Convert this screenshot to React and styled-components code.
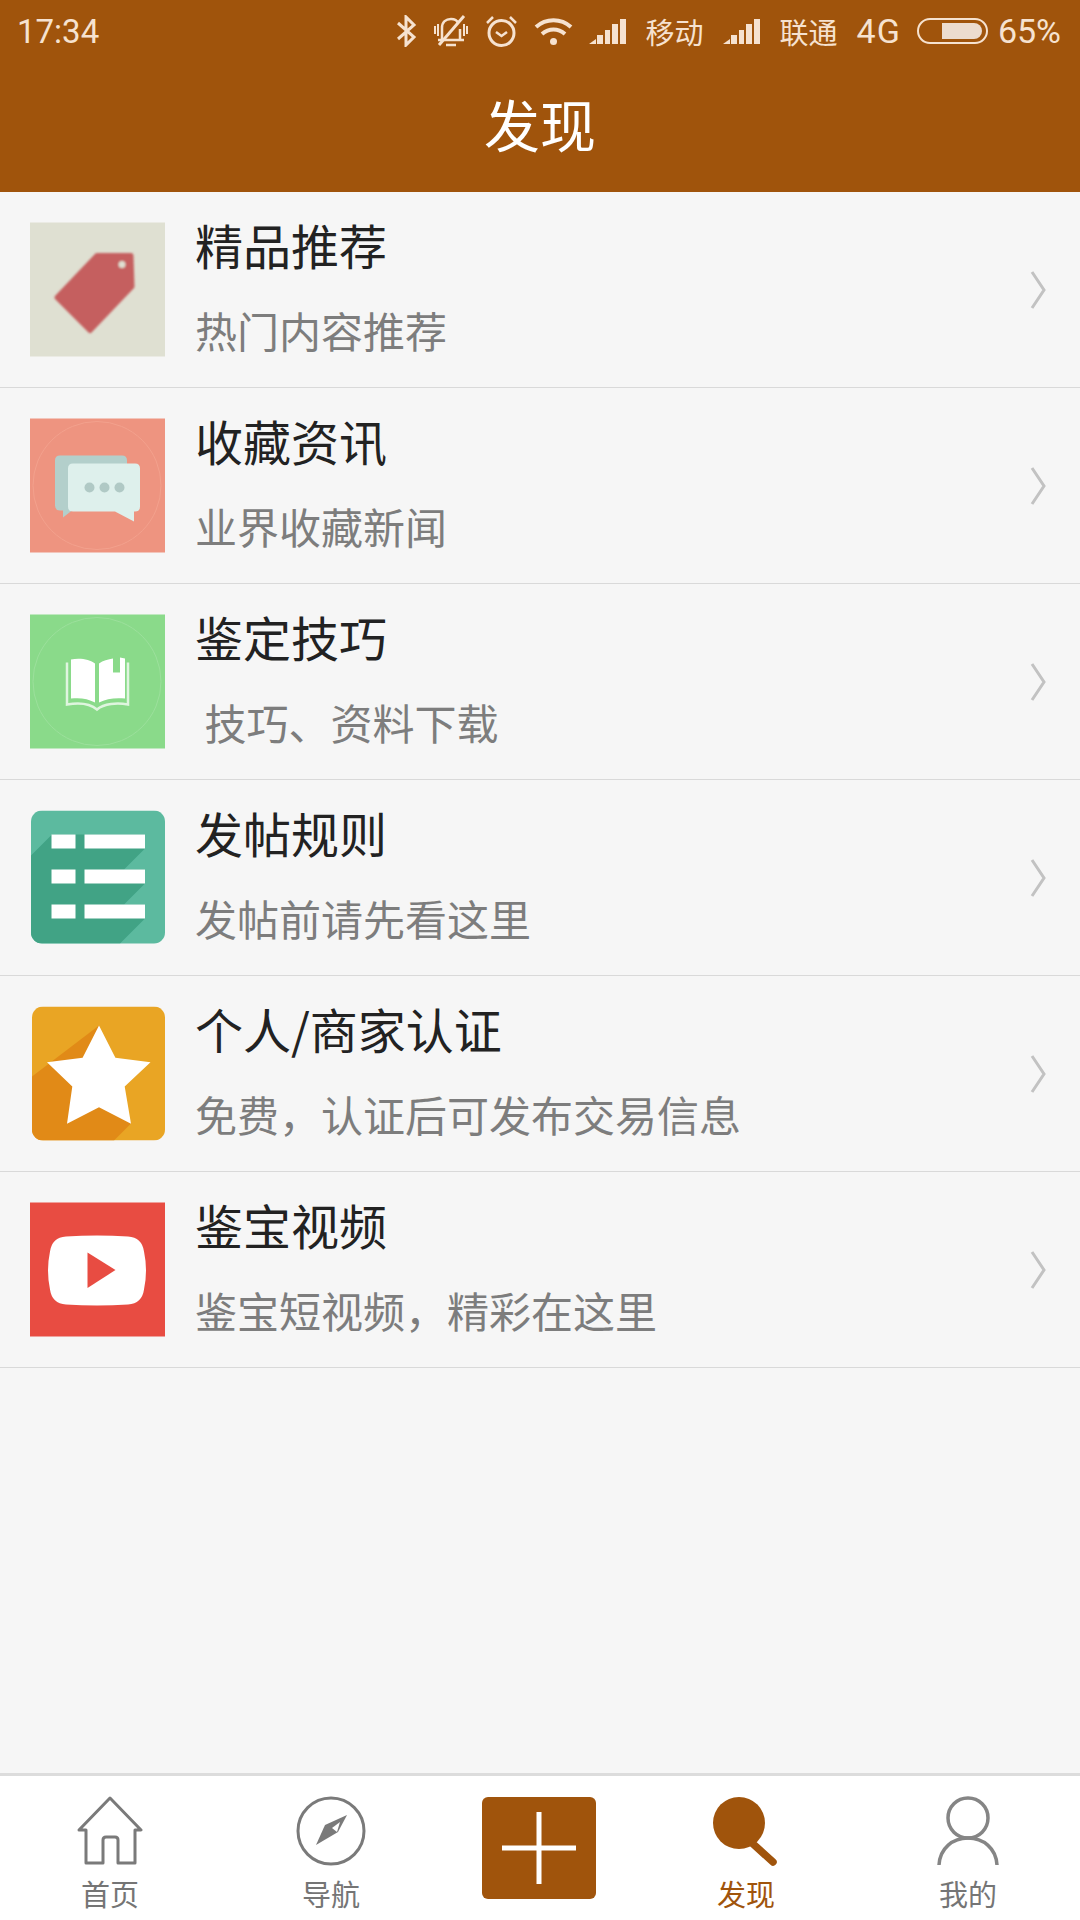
import React from "react";
import styled, { createGlobalStyle } from "styled-components";

const BROWN = "#a0540c";

const GlobalStyle = createGlobalStyle`
  html, body {
    margin: 0;
    padding: 0;
    background: #f6f6f6;
  }
  body {
    font-family: "Noto Sans CJK SC", "Noto Sans", sans-serif;
  }
`;

const Page = styled.div`
  width: 1080px;
  height: 1920px;
  display: flex;
  flex-direction: column;
  overflow: hidden;
`;

const Header = styled.header`
  height: 192px;
  background: ${BROWN};
  display: flex;
  flex-direction: column;
  flex-shrink: 0;
`;

const StatusBar = styled.div`
  height: 62px;
  padding: 0 19px 0 17px;
  display: flex;
  align-items: center;
  justify-content: space-between;
  color: #f6e2d0;
`;

const Clock = styled.span`
  font-family: Roboto, sans-serif;
  font-size: 33px;
`;

const StatusRight = styled.div`
  display: flex;
  align-items: center;
  gap: 16px;
`;

const Carrier = styled.span`
  font-size: 29px;
  line-height: 36px;
  margin: 0 3px;
`;

const StatusText = styled.span`
  font-family: Roboto, sans-serif;
  font-size: 34px;
  letter-spacing: ${(p) => p.$spacing || "0"};
`;

const Battery = styled.div`
  width: 71px;
  height: 26px;
  box-sizing: border-box;
  border: 2px solid #f6e2d0;
  border-radius: 13px;
  padding: 3px 4px;
  margin-right: -6px;
  display: flex;
  justify-content: flex-end;
`;

const BatteryFill = styled.div`
  width: 40px;
  background: #ecdccf;
  border-radius: 0 8px 8px 0;
`;

const PageTitle = styled.h1`
  margin: 0;
  flex: 1;
  display: flex;
  align-items: center;
  justify-content: center;
  padding-bottom: 10px;
  color: #fff;
  font-size: 56px;
  font-weight: 400;
`;

const List = styled.main`
  flex: 1;
`;

const Row = styled.div`
  height: 196px;
  box-sizing: border-box;
  border-bottom: 1px solid #d9d9d9;
  padding: 0 30px;
  display: flex;
  align-items: center;
`;

const Tile = styled.svg`
  width: 135px;
  height: 135px;
  flex-shrink: 0;
  display: block;
`;

const RowText = styled.div`
  flex: 1;
  margin-left: 30px;
  padding-bottom: 11px;
  display: flex;
  flex-direction: column;
  gap: 31px;
`;

const RowTitle = styled.div`
  font-size: 48px;
  line-height: 60px;
  color: #222;
`;

const RowSub = styled.div`
  font-size: 42px;
  line-height: 50px;
  color: #7d7d7d;
  white-space: pre;
`;

const Chevron = styled.svg`
  width: 16px;
  height: 40px;
  flex-shrink: 0;
  margin-right: 4px;
`;

const Nav = styled.nav`
  height: 147px;
  box-sizing: border-box;
  flex-shrink: 0;
  border-top: 3px solid #dcdcdc;
  background: #fff;
  padding-top: 20px;
  display: grid;
  grid-template-columns: 220px 222px 194px 220px 224px;
`;

const NavItem = styled.div`
  display: flex;
  flex-direction: column;
  align-items: center;
`;

const NavIcon = styled.svg`
  height: 70px;
  display: block;
`;

const NavLabel = styled.span`
  margin-top: 9px;
  font-size: 29px;
  line-height: 36px;
  color: ${(p) => (p.$active ? BROWN : "#757575")};
`;

const AddButton = styled.div`
  width: 114px;
  height: 102px;
  margin-top: 1px;
  background: ${BROWN};
  border-radius: 6px;
  display: flex;
  align-items: center;
  justify-content: center;
`;

const TagTile = () => (
  <Tile viewBox="0 0 135 134">
    <defs>
      <filter id="soft">
        <feGaussianBlur stdDeviation="0.9" />
      </filter>
    </defs>
    <rect width="135" height="134" fill="#dfe0d2" />
    <g filter="url(#soft)">
      <path d="M67 33 H101 L102 64 L60 108 L27 75 Z" fill="#c55f5f" stroke="#c55f5f" strokeWidth="5" strokeLinejoin="round" />
      <circle cx="92" cy="42" r="3.5" fill="#dfe0d2" />
    </g>
  </Tile>
);

const ChatTile = () => (
  <Tile viewBox="0 0 135 134">
    <rect width="135" height="134" fill="#ee9480" />
    <circle cx="67" cy="67" r="64" fill="none" stroke="#f3a18d" strokeWidth="1" />
    <path d="M30 37 H92 Q97 37 97 42 V92 H42 L33 99 V92 H30 Q25 92 25 87 V42 Q25 37 30 37 Z" fill="#b3cfcb" />
    <path d="M43 45 H105 Q110 45 110 50 V88 Q110 93 105 93 H104 V103 L85 93 H43 Q38 93 38 88 V50 Q38 45 43 45 Z" fill="#def0ec" />
    <circle cx="59.5" cy="69" r="5" fill="#b0c9c5" />
    <circle cx="74.5" cy="69" r="5" fill="#b0c9c5" />
    <circle cx="89.5" cy="69" r="5" fill="#b0c9c5" />
  </Tile>
);

const BookTile = () => (
  <Tile viewBox="0 0 135 134">
    <rect width="135" height="134" fill="#8ada8a" />
    <circle cx="67" cy="67" r="64" fill="none" stroke="#9ce09c" strokeWidth="1" />
    <path d="M37 48 V90 C48 88 60 89 67 95 C74 89 87 88 98 90 V48" fill="none" stroke="#dff5df" strokeWidth="2.5" />
    <path d="M41 45 C50 43 60 45 65 49 V88 C58 84 50 83 41 84 Z" fill="#fff" />
    <path d="M69 49 C73 46 78 45 83 44 V58 H90 V43 L95 44 V84 C86 83 76 84 69 88 Z" fill="#fff" />
  </Tile>
);

const SheetTile = () => (
  <Tile viewBox="0 0 135 134">
    <defs>
      <clipPath id="sheetClip">
        <rect x="1" y="0" width="134" height="133" rx="11" />
      </clipPath>
    </defs>
    <g clipPath="url(#sheetClip)">
      <rect width="135" height="134" fill="#5cba9f" />
      <path d="M1 45 L22 24 H115 V38 L94 59 H115 V73 L94 94 H115 V108 L90 133 H1 Z" fill="#41a385" />
    </g>
    <g fill="#fff">
      <rect x="21.5" y="24" width="24" height="14" />
      <rect x="54.5" y="24" width="60.5" height="14" />
      <rect x="21.5" y="59" width="24" height="14" />
      <rect x="54.5" y="59" width="60.5" height="14" />
      <rect x="21.5" y="94" width="24" height="14" />
      <rect x="54.5" y="94" width="60.5" height="14" />
    </g>
  </Tile>
);

const StarTile = () => (
  <Tile viewBox="0 0 135 134">
    <defs>
      <clipPath id="starClip">
        <rect x="2" y="0" width="133" height="134" rx="11" />
      </clipPath>
    </defs>
    <g clipPath="url(#starClip)">
      <rect width="135" height="134" fill="#e9a524" />
      <path d="M2 70 L69 19 L101 117 L84 134 H2 Z" fill="#e18a17" />
    </g>
    <path d="M69 19 L85.4 51.3 L120.5 55.7 L94.7 80 L101 117.3 L69 100.7 L37 117.3 L42.3 80 L17 55.7 L52.6 51.3 Z" fill="#fff" />
  </Tile>
);

const VideoTile = () => (
  <Tile viewBox="0 0 135 134">
    <rect width="135" height="134" fill="#e84c42" />
    <path d="M36 34 Q67 32 98 34 Q112 35 114 49 Q118 68 114 87 Q112 101 98 102 Q67 104 36 102 Q22 101 20 87 Q16 68 20 49 Q22 35 36 34 Z" fill="#fff" />
    <path d="M57.5 50 L85.5 67.5 L57.5 85.5 Z" fill="#e84c42" />
  </Tile>
);

const items = [
  { id: "tag", Icon: TagTile, title: "精品推荐", sub: "热门内容推荐" },
  { id: "chat", Icon: ChatTile, title: "收藏资讯", sub: "业界收藏新闻" },
  { id: "book", Icon: BookTile, title: "鉴定技巧", sub: " 技巧、资料下载" },
  { id: "sheet", Icon: SheetTile, title: "发帖规则", sub: "发帖前请先看这里" },
  { id: "star", Icon: StarTile, title: "个人/商家认证", sub: "免费，认证后可发布交易信息" },
  { id: "video", Icon: VideoTile, title: "鉴宝视频", sub: "鉴宝短视频，精彩在这里" },
];

const SignalBars = () => (
  <svg width="38" height="26" viewBox="0 0 38 26" fill="#f6e2d0">
    <path d="M0 26 L7 21 V26 Z" />
    <rect x="8" y="17" width="6" height="9" />
    <rect x="16" y="12" width="5" height="14" />
    <rect x="23" y="6" width="6" height="20" />
    <rect x="31" y="1" width="6" height="25" />
  </svg>
);

const StatusIcons = () => (
  <>
    <svg width="21" height="32" viewBox="0 0 21 32" fill="none" stroke="#f6e2d0" strokeWidth="3">
      <path d="M2 8 L18 22 L10 30 V2 L18 10 L2 24" />
    </svg>
    <svg width="36" height="33" viewBox="0 0 36 33" fill="none" stroke="#f6e2d0" strokeWidth="2.5">
      <path d="M9 24 V13 C9 7 13 4 18 4 C21 4 24 5 25 8 M27 14 V24 M5 25 H31 M13 30 H23" />
      <path d="M31 1 L6 30" strokeWidth="3" />
      <path d="M2 11 V19 M5 9 V21 M31 9 V21 M34 11 V19" strokeWidth="2" />
    </svg>
    <svg width="33" height="32" viewBox="0 0 33 32" fill="none" stroke="#f6e2d0" strokeWidth="3">
      <circle cx="16.5" cy="18" r="12.5" />
      <path d="M11 17 L16.5 21 L22 17 M2 8 L8 2 M31 8 L25 2" strokeWidth="2.5" />
    </svg>
    <svg width="39" height="27" viewBox="0 0 39 27" fill="none" stroke="#f6e2d0" strokeWidth="4">
      <path d="M2 9 C12 0 27 0 37 9 M8 16 C15 10 24 10 31 16" />
      <circle cx="19.5" cy="23.5" r="3.5" fill="#f6e2d0" stroke="none" />
    </svg>
    <SignalBars />
    <Carrier>移动</Carrier>
    <SignalBars />
    <Carrier>联通</Carrier>
    <StatusText $spacing="1px">4G</StatusText>
    <Battery>
      <BatteryFill />
    </Battery>
    <StatusText>65%</StatusText>
  </>
);

export default function App() {
  return (
    <Page>
      <GlobalStyle />
      <Header>
        <StatusBar>
          <Clock>17:34</Clock>
          <StatusRight>
            <StatusIcons />
          </StatusRight>
        </StatusBar>
        <PageTitle>发现</PageTitle>
      </Header>
      <List>
        {items.map(({ id, Icon, title, sub }) => (
          <Row key={id}>
            <Icon />
            <RowText>
              <RowTitle>{title}</RowTitle>
              <RowSub>{sub}</RowSub>
            </RowText>
            <Chevron viewBox="0 0 16 40" fill="none" stroke="#c2c2c2" strokeWidth="3">
              <path d="M2 2 L14 20 L2 38" />
            </Chevron>
          </Row>
        ))}
      </List>
      <Nav>
        <NavItem>
          <NavIcon viewBox="0 0 66 70" width="66" fill="none" stroke="#7a7a7a" strokeWidth="3" strokeLinejoin="round">
            <path d="M9 34 H2 L33 2 L64 34 H58 V67 H41 V44 Q41 41 38 41 H29 Q26 41 26 44 V67 H9 Z" />
          </NavIcon>
          <NavLabel>首页</NavLabel>
        </NavItem>
        <NavItem>
          <NavIcon viewBox="0 0 70 70" width="70">
            <circle cx="35" cy="35" r="33" fill="none" stroke="#7a7a7a" strokeWidth="3" />
            <path d="M51 19 L29 29 L20 49 L42 36 Z" fill="#7a7a7a" />
            <path d="M44 26 L36 32 L41 36 Z" fill="#fff" />
          </NavIcon>
          <NavLabel>导航</NavLabel>
        </NavItem>
        <NavItem>
          <AddButton>
            <svg width="74" height="72" viewBox="0 0 74 72" stroke="#fff" strokeWidth="5">
              <path d="M0 36 H74 M37 0 V72" />
            </svg>
          </AddButton>
        </NavItem>
        <NavItem>
          <NavIcon viewBox="0 0 68 70" width="68" fill={BROWN}>
            <circle cx="27" cy="27" r="26" />
            <path d="M40 47 L61 66" stroke={BROWN} strokeWidth="7.5" strokeLinecap="round" />
          </NavIcon>
          <NavLabel $active>发现</NavLabel>
        </NavItem>
        <NavItem>
          <NavIcon viewBox="0 0 62 70" width="62" fill="none" stroke="#858585" strokeWidth="3.5">
            <circle cx="31" cy="22" r="20" />
            <path d="M2 69 C3 52 16 42 31 42 C46 42 59 52 60 69" />
          </NavIcon>
          <NavLabel>我的</NavLabel>
        </NavItem>
      </Nav>
    </Page>
  );
}
